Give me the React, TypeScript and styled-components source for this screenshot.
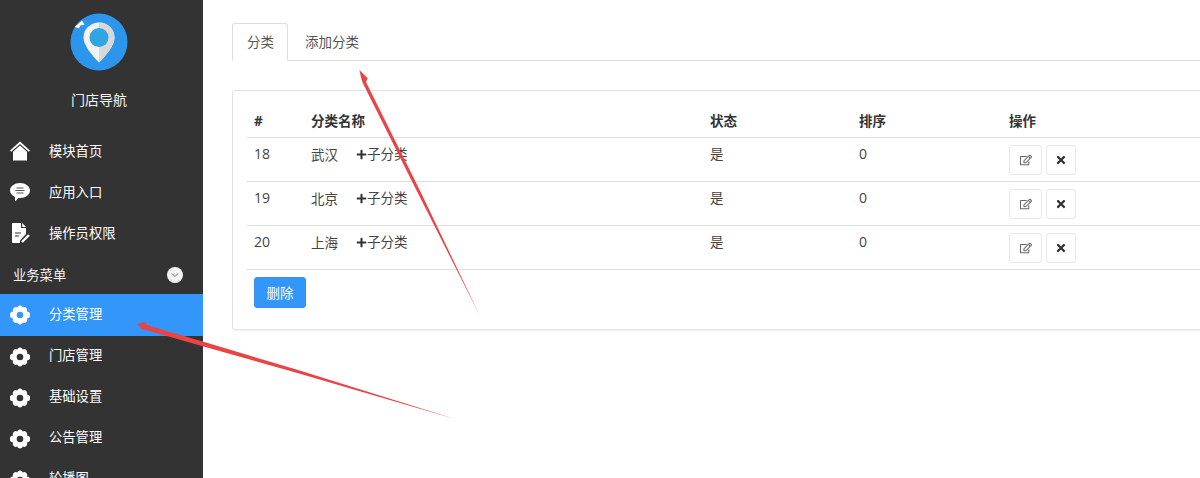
import React from "react";
import styled, { createGlobalStyle } from "styled-components";
import { FaPlus, FaTimes, FaRegEdit } from "react-icons/fa";

const Global = createGlobalStyle`
  html, body { margin: 0; padding: 0; height: 100%; overflow: hidden; background: #fff; }
  body { font-family: "Open Sans", "Noto Sans CJK SC", sans-serif; font-size: 13.5px; color: #444; }
`;
const Page = styled.div`position: relative; display: flex; width: 1200px; height: 478px; overflow: hidden;`;
const Sidebar = styled.aside`flex: 0 0 203px; background: #333; color: #fff; height: 478px; overflow: hidden;`;
const Brand = styled.div`display: flex; flex-direction: column; align-items: center; padding: 13px 5px 0 0; height: 130px; box-sizing: border-box;`;
const BrandTitle = styled.div`margin-top: 19px; font-size: 14px; line-height: 20px; color: #f4f4f4;`;
const MenuItem = styled.div<{ $active?: boolean }>`
  display: flex; align-items: center; height: ${p => (p.$active ? 42 : 41)}px; padding-left: 10px; box-sizing: border-box;
  background: ${p => (p.$active ? "#3296fa" : "transparent")}; color: #fff; font-size: 13.3px;
  svg { flex: 0 0 20px; margin-right: 19px; }
`;
const Label = styled.span<{ $lift: number }>`margin-top: -${p => p.$lift}px;`;
const MenuGroup = styled.div`display: flex; align-items: center; justify-content: space-between; height: 41px; padding: 2px 20px 0 13px; box-sizing: border-box; font-size: 13.3px; color: #f4f4f4;`;
const Chevron = styled.span`display: flex; align-items: center; justify-content: center; width: 16px; height: 16px; border-radius: 50%; background: #f4f4f4;`;
const Main = styled.main`flex: 1; min-width: 0; padding: 23px 0 0 29px;`;
const Tabs = styled.div`display: flex; height: 37px; width: 1100px; border-bottom: 1px solid #ddd;`;
const Tab = styled.div<{ $active?: boolean }>`
  display: flex; align-items: center; padding: 0 ${p => (p.$active ? 14 : 17)}px 2px; height: 37px; margin-bottom: -1px; box-sizing: border-box; white-space: nowrap;
  color: #555; font-size: 13.5px; border-radius: 3px 3px 0 0; width: ${p => (p.$active ? "56px" : "auto")};
  ${p => p.$active ? "height: 38px; border: 1px solid #ddd; border-bottom: 1px solid #fff; background: #fff;" : ""}
`;
const Panel = styled.section`margin-top: 29px; width: 1100px; height: 240px; box-sizing: border-box; border: 1px solid #e2e2e2; border-radius: 3px; padding: 14px; box-shadow: 0 1px 1px rgba(0,0,0,.05);`;
const Table = styled.div`width: 1060px;`;
const Row = styled.div<{ $head?: boolean }>`
  display: grid; grid-template-columns: 57px 399px 149px 150px 1fr; height: ${p => (p.$head ? 33 : 44)}px; box-sizing: border-box;
  border-bottom: 1px solid #ddd; color: ${p => (p.$head ? "#333" : "#444")}; font-weight: ${p => (p.$head ? 700 : 400)};
`;
const Cell = styled.div<{ $num?: boolean }>`
  padding: 7px 0 0 7px; line-height: 18px; font-size: ${p => (p.$num ? "14px" : "inherit")};
`;
const Name = styled.span`display: inline-block; width: 46px;`;
const Sub = styled.span`display: inline-flex; align-items: center; svg { margin: 0 0 0 -1px; color: #333; }`;
const Actions = styled.div`display: flex; gap: 4px; padding: 7px 0 0 7px;`;
const IconButton = styled.button`display: flex; align-items: center; justify-content: center; width: 33px; height: 30px; padding: 0 0 1px; background: #fff; border: 1px solid #e8e8e8; border-radius: 3px; color: #666;`;
const SmallButton = styled(IconButton)`width: 30px; color: #333;`;
const Danger = styled.button`display: block; margin: 7px 0 0 7px; width: 52px; height: 31px; background: #3296fa; border: 1px solid #3a8fe8; border-radius: 3px; color: #fff; font: inherit; padding: 0 0 2px;`;
const Arrows = styled.svg`position: absolute; left: 0; top: 0; pointer-events: none;`;

const Gear = () => (
  <svg width="20" height="20" viewBox="0 0 20 20">
    <path fillRule="evenodd" fill="#fff" d="M10 .5a2.800 2.800 0 0 1 2.700 2 2.800 2.800 0 0 1 3.500.6 2.800 2.800 0 0 1 .6 3.500 2.800 2.800 0 0 1 0 6.800 2.800 2.800 0 0 1-.6 3.500 2.800 2.800 0 0 1-3.500.6 2.800 2.800 0 0 1-5.400 0 2.800 2.800 0 0 1-3.500-.6 2.800 2.800 0 0 1-.6-3.500 2.800 2.800 0 0 1 0-6.800 2.800 2.800 0 0 1 .6-3.500 2.800 2.800 0 0 1 3.500-.6 2.800 2.800 0 0 1 2.700-2zM10 6.700a3.300 3.300 0 1 0 0 6.600 3.300 3.300 0 0 0 0-6.600z"/>
  </svg>
);
const Home = () => (
  <svg width="20" height="20" viewBox="0 0 20 20">
    <path fill="#fff" d="M10 .5 20 9.500l-1.200 1.300L10 3 1.200 10.800 0 9.500z"/>
    <path fill="#fff" d="M10 4.500 17 10.800V19.500H3V10.800z"/>
  </svg>
);
const Chat = () => (
  <svg width="20" height="20" viewBox="0 0 20 20">
    <path fill="#fff" d="M10 1c5.500 0 10 3.200 10 7.500S15.500 16 10 16l-1.500-.1L5 19.500v-4.600C2 13.700 0 11.300 0 8.500 0 4.200 4.500 1 10 1z"/>
    <path stroke="#555" strokeWidth="1.200" d="M6.500 6h7M5.500 8.500h9M6.500 11h7"/>
  </svg>
);
const Doc = () => (
  <svg width="20" height="20" viewBox="0 0 20 20">
    <path fill="#fff" d="M2 0h9v5h5v6l-6 6.500V20H3a1 1 0 0 1-1-1z"/>
    <path fill="#fff" d="M12.200 0 16 4h-3.800z"/>
    <path stroke="#333" strokeWidth="1.200" d="M5 10h6M5 13h4"/>
    <path stroke="#fff" strokeWidth="2.400" d="M12 19l7-7"/>
  </svg>
);
const Pin = () => (
  <svg width="58" height="58" viewBox="0 0 58 58">
    <circle cx="29" cy="29" r="28.500" fill="#2b96ec"/>
    <path fill="#fff" d="M4.800 14 12 7.500l2.500 4.500-4 .3-1.500 3z"/>
    <path fill="#f2f2f2" d="M29 9.500c8.500 0 15.500 6.500 15.500 15 0 8-8.500 18-15.500 25-7-7-15.500-17-15.500-25 0-8.500 7-15 15.500-15z"/>
    <path fill="#d8d8d8" d="M29 9.500c8.500 0 15.500 6.500 15.500 15 0 8-8.500 18-15.500 25z"/>
    <circle cx="29" cy="24.500" r="9.500" fill="#2fa6e2"/>
  </svg>
);

const rows = [["18", "武汉"], ["19", "北京"], ["20", "上海"]];
const menu = [["模块首页", Home], ["应用入口", Chat], ["操作员权限", Doc]] as const;
const sub = ["门店管理", "基础设置", "公告管理", "轮播图"];

export default function App() {
  return (
    <Page>
      <Global />
      <Sidebar>
        <Brand><Pin /><BrandTitle>门店导航</BrandTitle></Brand>
        {menu.map(([t, I]) => <MenuItem key={t}><I /><Label $lift={0}>{t}</Label></MenuItem>)}
        <MenuGroup>业务菜单<Chevron><svg width="8" height="6" viewBox="0 0 8 6"><path d="M1 1.500 4 4.500 7 1.500" fill="none" stroke="#777" strokeWidth="1"/></svg></Chevron></MenuGroup>
        <MenuItem $active><Gear /><Label $lift={4}>分类管理</Label></MenuItem>
        {sub.map(t => <MenuItem key={t}><Gear /><Label $lift={4}>{t}</Label></MenuItem>)}
      </Sidebar>
      <Main>
        <Tabs><Tab $active>分类</Tab><Tab>添加分类</Tab></Tabs>
        <Panel>
          <Table>
            <Row $head>
              <Cell>#</Cell><Cell>分类名称</Cell><Cell>状态</Cell><Cell>排序</Cell><Cell>操作</Cell>
            </Row>
            {rows.map(([id, n]) => (
              <Row key={id}>
                <Cell $num>{id}</Cell>
                <Cell><Name>{n}</Name><Sub><FaPlus size={11} />子分类</Sub></Cell>
                <Cell>是</Cell>
                <Cell $num>0</Cell>
                <Actions>
                  <IconButton><FaRegEdit size={12} /></IconButton>
                  <SmallButton><FaTimes size={12} /></SmallButton>
                </Actions>
              </Row>
            ))}
          </Table>
          <Danger>删除</Danger>
        </Panel>
      </Main>
      <Arrows width="1200" height="478" viewBox="0 0 1200 478">
        <path fill="#ea4343" d="M359.300 70 367.700 78.300 366 82 420.300 191.300 479 314 417.700 192.700 363 83.500 361.700 80z"/>
        <path fill="#ea4343" d="M137.300 324 146 321.700 146.500 325 201 341 296.400 369.600 455 419 295.600 372.400 200 345.500 144 329.500 141.700 329.300z"/>
      </Arrows>
    </Page>
  );
}
